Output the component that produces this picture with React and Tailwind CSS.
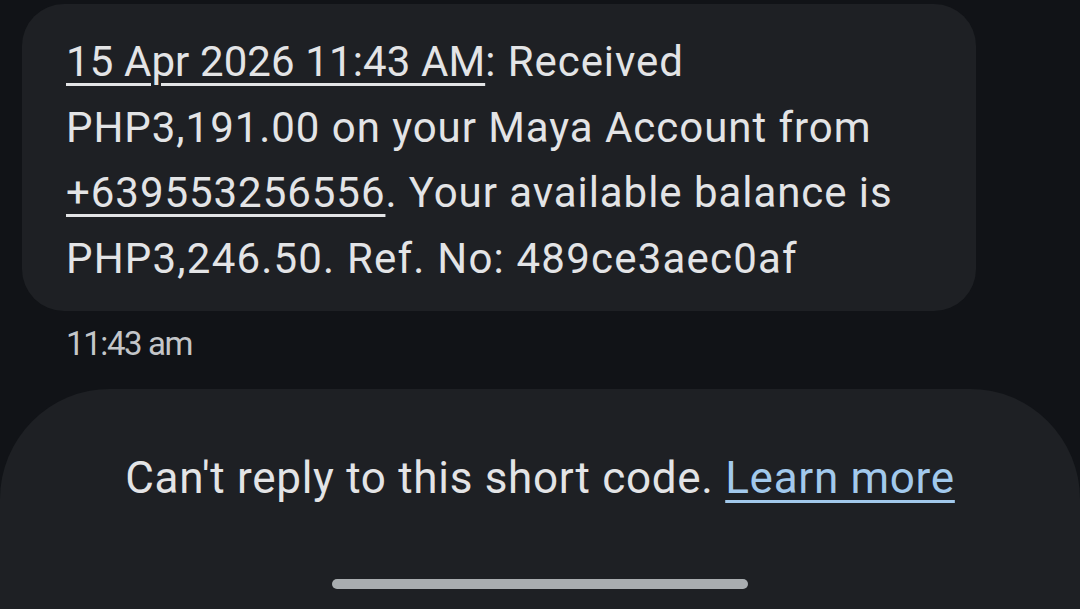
import React from 'react';

const MessageBubble = () => (
  <div className="ml-[22px] mt-[4px] w-[954px] h-[307px] rounded-[42px] bg-[#1e2024] pl-[44px] pt-[25px]">
    <p className="text-[42px] leading-[65.5px] text-[#e3e4e6] tracking-[0.95px]">
      <span className="underline decoration-[3px] underline-offset-[7px] tracking-[0.1px]">15 Apr 2026 11:43 AM</span>: Received
      <br />
      PHP3,191.00 on your Maya Account from
      <br />
      <span className="underline decoration-[3px] underline-offset-[7px]">+639553256556</span>. Your available balance is
      <br />
      <span className="tracking-[1.2px]">PHP3,246.50. Ref. No: 489ce3aec0af</span>
    </p>
  </div>
);

const App = () => {
  return (
    <div
      className="w-[1080px] h-[609px] bg-[#111317] overflow-hidden flex flex-col"
      style={{ fontFamily: 'Roboto, "Noto Sans", sans-serif' }}
    >
      <MessageBubble />
      <div className="pl-[66px] mt-[13px] text-[33px] leading-[40px] tracking-[-1.4px] text-[#c4c6c9]">11:43 am</div>
      <div className="mt-[25px] flex-1 rounded-t-[110px] bg-[#1e2024] flex flex-col items-center">
        <p className="mt-[59px] text-[44px] leading-[60px] text-[#e3e4e6] tracking-[0.7px]">
          Can't reply to this short code.{' '}
          <span className="text-[#a2c9ec] underline decoration-[3px] underline-offset-[7px]">Learn more</span>
        </p>
        <div className="mt-[71px] w-[416px] h-[10px] rounded-full bg-[#a9adb0]" />
      </div>
    </div>
  );
};

export default App;
